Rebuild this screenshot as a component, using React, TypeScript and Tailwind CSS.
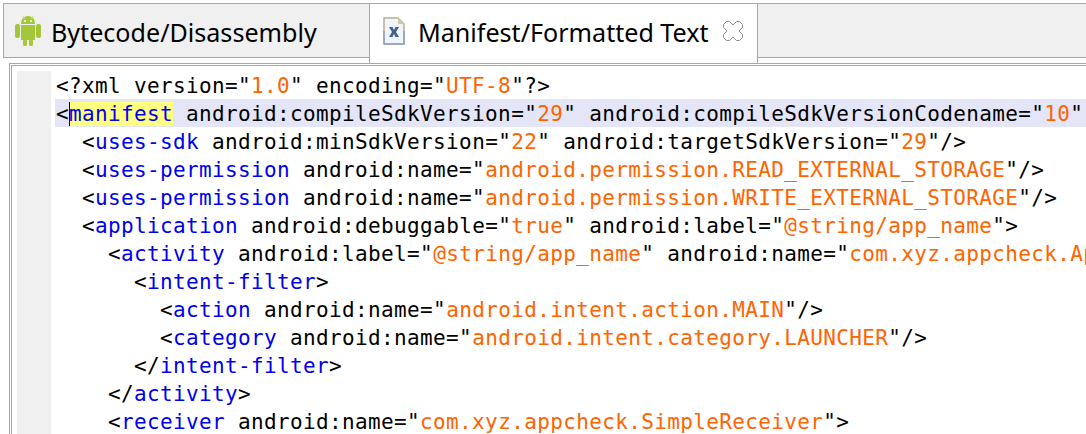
import React from 'react';

type Part = [string, 't' | 'a' | 'v' | 'p'];

const tone = {
  t: 'text-[#0000f0]',
  a: 'text-black',
  v: 'text-[#ff6400]',
  p: 'text-black',
};

function attr(name: string, value: string, lead = ' '): Part[] {
  return [[`${lead}${name}="`, 'a'], [value, 'v'], ['"', 'a']];
}

const xmlDecl: Part[] = [['<?xml version="', 'p'], ['1.0', 'v'], ['" encoding="', 'p'], ['UTF-8', 'v'], ['"?>', 'p']];

const rows: { indent: number; parts: Part[] }[] = [
  {
    indent: 1,
    parts: [['<uses-sdk', 't'], ...attr('android:minSdkVersion', '22'), ...attr('android:targetSdkVersion', '29'), ['/>', 'p']],
  },
  {
    indent: 1,
    parts: [['<uses-permission', 't'], ...attr('android:name', 'android.permission.READ_EXTERNAL_STORAGE'), ['/>', 'p']],
  },
  {
    indent: 1,
    parts: [['<uses-permission', 't'], ...attr('android:name', 'android.permission.WRITE_EXTERNAL_STORAGE'), ['/>', 'p']],
  },
  {
    indent: 1,
    parts: [['<application', 't'], ...attr('android:debuggable', 'true'), ...attr('android:label', '@string/app_name'), ['>', 'p']],
  },
  {
    indent: 2,
    parts: [['<activity', 't'], ...attr('android:label', '@string/app_name'), ...attr('android:name', 'com.xyz.appcheck.App'), ['>', 'p']],
  },
  { indent: 3, parts: [['<intent-filter', 't'], ['>', 'p']] },
  { indent: 4, parts: [['<action', 't'], ...attr('android:name', 'android.intent.action.MAIN'), ['/>', 'p']] },
  { indent: 4, parts: [['<category', 't'], ...attr('android:name', 'android.intent.category.LAUNCHER'), ['/>', 'p']] },
  { indent: 3, parts: [['</intent-filter', 't'], ['>', 'p']] },
  { indent: 2, parts: [['</activity', 't'], ['>', 'p']] },
  { indent: 2, parts: [['<receiver', 't'], ...attr('android:name', 'com.xyz.appcheck.SimpleReceiver'), ['>', 'p']] },
];

function CodeLine({ indent, parts }: { indent: number; parts: Part[] }) {
  return (
    <div className="h-7 pl-px whitespace-pre leading-[30px]">
      {'  '.repeat(indent)}
      {parts.map(([text, kind], i) => {
        // the bracket of a tag stays black, the name is blue
        if (kind === 't') {
          const bracket = text.startsWith('</') ? '</' : '<';
          return (
            <span key={i}>
              <span className="text-black">{bracket}</span>
              <span className={tone.t}>{text.slice(bracket.length)}</span>
            </span>
          );
        }
        return (
          <span key={i} className={tone[kind]}>
            {text}
          </span>
        );
      })}
    </div>
  );
}

function AndroidIcon() {
  return (
    <svg width="26" height="32" viewBox="0 0 26 32" className="shrink-0">
      <path d="M6 8a7 7 0 0 1 14 0v1H6z" fill="#a4c639" />
      <path d="M8 1l2 3M18 1l-2 3" stroke="#c6dc8c" strokeWidth="1" />
      <rect x="6" y="10" width="14" height="15" fill="#a4c639" />
      <rect x="0" y="9" width="5" height="14" rx="2" fill="#a4c639" />
      <rect x="21" y="9" width="5" height="14" rx="2" fill="#a4c639" />
      <rect x="8" y="24" width="4" height="7" rx="1.5" fill="#a4c639" />
      <rect x="14" y="24" width="4" height="7" rx="1.5" fill="#a4c639" />
      <rect x="9" y="5" width="2" height="2" fill="#e3edc0" />
      <rect x="15" y="5" width="2" height="2" fill="#e3edc0" />
    </svg>
  );
}

function XmlFileIcon() {
  return (
    <svg width="22" height="28" viewBox="0 0 22 28" className="shrink-0">
      <path d="M1 1h14l6 6v20H1z" fill="#f0f4fb" stroke="#b5b09a" strokeWidth="1.5" />
      <path d="M1 27h20V14M1 27V14" fill="none" stroke="#8fa3c0" strokeWidth="1.5" />
      <path d="M15 1v6h6z" fill="#dcc98c" />
      <path d="M6 10h3.500l1.500 3 1.500-3H16l-3 5 3 5h-3.500L11 17l-1.500 3H6l3-5z" fill="#44628c" />
    </svg>
  );
}

function CloseIcon() {
  return (
    <svg width="20" height="20" viewBox="0 0 20 20" className="shrink-0">
      <path
        d="M3.500.5h3L10 4l3.500-3.500h3l3 3v3L16 10l3.500 3.500v3l-3 3h-3L10 16l-3.500 3.500h-3l-3-3v-3L4 10 .5 6.500v-3z"
        fill="#fff"
        stroke="#8c8c8c"
        strokeWidth="1"
      />
    </svg>
  );
}

export default function App() {
  return (
    <div className="h-[434px] w-[1086px] overflow-hidden bg-white pt-[3px] pl-[3px]">
      <div className="flex h-[55px] border-t border-l border-[#a8a8a8] bg-[#f0f0f0] font-['Noto_Sans',sans-serif] text-[25.1px] text-black">
        <div className="flex w-[365px] shrink-0 items-center gap-[10px] border-b border-[#a8a8a8] pl-[11px]">
          <AndroidIcon />
          <span className="mt-1">Bytecode/Disassembly</span>
        </div>
        <div className="relative z-10 flex h-[59px] w-[389px] shrink-0 items-center border-x border-[#a8a8a8] bg-white pb-[6px] pl-[13px]">
          <XmlFileIcon />
          <span className="ml-[13px] mt-1">Manifest/Formatted Text</span>
          <span className="ml-auto mr-[14px]">
            <CloseIcon />
          </span>
        </div>
        <div className="flex-1 border-b border-[#a8a8a8]" />
      </div>
      <div className="ml-[6px] mt-[5px] border-t border-l border-[#a8a8a8] pt-px pl-px">
        <div className="flex border-t border-l border-[#a8a8a8] pl-[5px] pt-[5px] font-['DejaVu_Sans_Mono',monospace] text-[21px] tracking-[0.36px]">
          <div className="w-[34px] shrink-0 bg-[#f0f0f0]" />
          <div className="ml-1 min-w-0 flex-1 overflow-hidden">
            <CodeLine indent={0} parts={xmlDecl} />
            <div className="h-7 bg-[#e4e6f8] pl-px leading-[30px] whitespace-pre">
              &lt;
              <span className="bg-[#ffff80] text-[#0000f0] shadow-[inset_1px_0_0_#000]">manifest</span>
              {' android:compileSdkVersion="'}
              <span className="text-[#ff6400]">29</span>
              {'" android:compileSdkVersionCodename="'}
              <span className="text-[#ff6400]">10</span>
              "
            </div>
            {rows.map((row, i) => (
              <CodeLine key={i} {...row} />
            ))}
          </div>
        </div>
      </div>
    </div>
  );
}
